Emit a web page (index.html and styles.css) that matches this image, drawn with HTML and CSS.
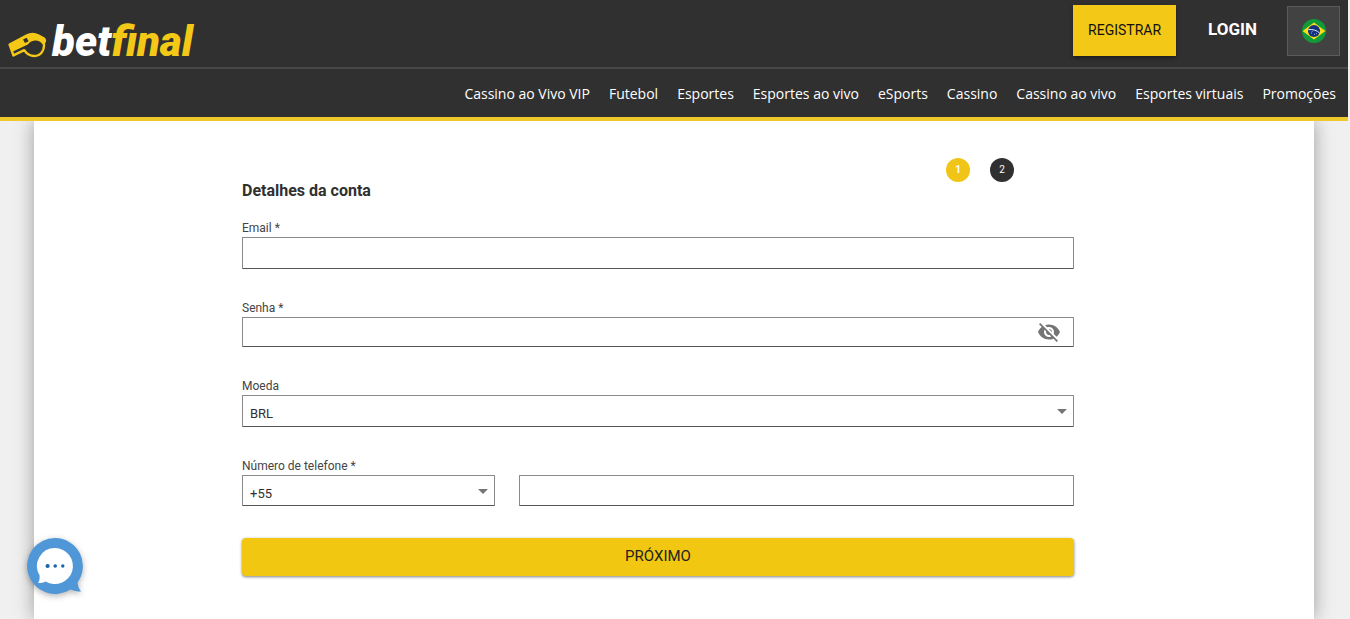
FILE: index.html
```html
<!DOCTYPE html>
<html lang="pt-BR">
<head>
<meta charset="utf-8">
<title>betfinal</title>
<meta name="viewport" content="width=device-width, initial-scale=1">
<link rel="stylesheet" href="styles.css">
</head>
<body>
<header class="header">
  <div class="topbar">
    <a class="logo" href="#">
      <svg class="whistle" viewBox="0 0 39 26" aria-hidden="true">
        <path d="M1.6 12.6 L19 3.4 C22.5 1.6 27 1.8 30.6 3.6 L35.6 6.2 C37.4 7.4 37.4 9.6 35.8 11 C37 18 32.8 24 26.4 24 C21.6 24 18.6 21.8 16.2 18.2 L5.4 23.4 Z" fill="none" stroke="#f3c816" stroke-width="2.4" stroke-linejoin="round"/>
        <path d="M1 12.4 L19 3 C22.5 1.2 27 1.4 30.6 3.2 L36 6.4 L36 11 L34.6 12.6 C33 9.8 30 8.4 27 8.6 C23.6 8.8 21.6 10.4 19.8 12.6 L4 20 Z" fill="#f3c816"/>
        <path d="M15 7.6 L18.6 5.8 L20.6 9.2 L17 11 Z" fill="#303030"/>
      </svg>
      <span class="wordmark">bet<span class="wordmark-accent">final</span></span>
    </a>
    <div class="actions">
      <button class="register" type="button">REGISTRAR</button>
      <a class="login" href="#">LOGIN</a>
      <button class="language" type="button" aria-label="Português (Brasil)">
        <svg width="24" height="24" viewBox="0 0 24 24" aria-hidden="true">
          <circle cx="12" cy="12" r="12" fill="#119b38"/>
          <path d="M0.6 12 L12 3.6 L23.4 12 L12 20.4 Z" fill="#fbdd16"/>
          <circle cx="12" cy="12" r="6" fill="#12307f"/>
          <path d="M6.4 10.6 C10.5 10 15 11.4 17.6 14" fill="none" stroke="#e8eef8" stroke-width="1"/>
          <path d="M9 14h1M12 15.4h1M14 14.8h1M9.6 12.4h1" stroke="#b8c8e8" stroke-width="0.8"/>
        </svg>
      </button>
    </div>
  </div>
  <nav class="nav">
    <a href="#">Cassino ao Vivo VIP</a>
    <a href="#">Futebol</a>
    <a href="#">Esportes</a>
    <a href="#">Esportes ao vivo</a>
    <a href="#">eSports</a>
    <a href="#">Cassino</a>
    <a href="#">Cassino ao vivo</a>
    <a href="#">Esportes virtuais</a>
    <a href="#">Promoções</a>
  </nav>
</header>
<main class="card">
  <form class="form">
    <div class="form-head">
      <h1 class="title">Detalhes da conta</h1>
      <ol class="steps">
        <li class="step step-active">1</li>
        <li class="step">2</li>
      </ol>
    </div>
    <div class="field">
      <label for="email">Email *</label>
      <input class="control" id="email" type="email">
    </div>
    <div class="field">
      <label for="password">Senha *</label>
      <div class="control control-short password">
        <input class="password-input" id="password" type="password">
        <button class="reveal" type="button" aria-label="Mostrar senha">
          <svg width="24" height="24" viewBox="0 0 24 24" fill="#757575" aria-hidden="true">
            <path d="M12 7c2.76 0 5 2.24 5 5 0 .65-.13 1.26-.36 1.83l2.92 2.92c1.51-1.26 2.7-2.89 3.43-4.75-1.73-4.39-6-7.5-11-7.5-1.4 0-2.74.25-3.98.7l2.16 2.16C10.74 7.13 11.35 7 12 7zM2 4.27l2.28 2.28.46.46C3.08 8.3 1.78 10.02 1 12c1.73 4.39 6 7.5 11 7.5 1.55 0 3.03-.3 4.38-.84l.42.42L19.73 22 21 20.73 3.27 3 2 4.27zM7.53 9.8l1.55 1.55c-.05.21-.08.43-.08.65 0 1.66 1.34 3 3 3 .22 0 .44-.03.65-.08l1.55 1.55c-.67.33-1.41.53-2.2.53-2.76 0-5-2.24-5-5 0-.79.2-1.53.53-2.2zm4.31-.78l3.15 3.15.02-.16c0-1.66-1.34-3-3-3l-.17.01z"/>
          </svg>
        </button>
      </div>
    </div>
    <div class="field">
      <label for="currency">Moeda</label>
      <div class="select">
        <select class="control" id="currency"><option>BRL</option></select>
      </div>
    </div>
    <div class="field">
      <label for="prefix">Número de telefone *</label>
      <div class="phone">
        <div class="select">
          <select class="control" id="prefix"><option>+55</option></select>
        </div>
        <input class="control" type="tel" aria-label="Número de telefone">
      </div>
    </div>
    <button class="submit" type="submit">PRÓXIMO</button>
  </form>
</main>
<button class="chat" type="button" aria-label="Chat">
  <svg width="56" height="56" viewBox="0 0 56 56" aria-hidden="true">
    <path d="M28 0 A28 28 0 0 1 50.5 44.5 C51 48 52 51 54 53.5 C50 53.4 46.5 52.6 43.5 51.4 A28 28 0 1 1 28 0 Z" fill="#4f97d7"/>
    <path d="M28 10 A18 18 0 1 1 18.6 43.4 C16.6 44.6 14 45 11 45 C12.4 43 12.8 40.4 12.6 37.4 A18 18 0 0 1 28 10 Z" fill="#fff"/>
    <circle cx="20.6" cy="28" r="2.1" fill="#1b66a8"/>
    <circle cx="28.2" cy="28" r="1.8" fill="#1b66a8"/>
    <circle cx="35.8" cy="28" r="1.7" fill="#1b66a8"/>
  </svg>
</button>
</body>
</html>
```
FILE: styles.css
```css
* { box-sizing: border-box; }

body {
  margin: 0;
  padding-right: 2px;
  min-height: 100vh;
  display: flex;
  flex-direction: column;
  background: #f0f0f0;
  color: #303030;
  font-family: Roboto, sans-serif;
}

button, input, select { font-family: inherit; }
button { border: 0; padding: 0; cursor: pointer; }
a { color: inherit; text-decoration: none; }

.header {
  position: relative;
  z-index: 1;
  background: #303030;
  color: #fff;
  border-bottom: 4px solid #efc928;
}

.topbar {
  display: flex;
  justify-content: space-between;
  align-items: flex-start;
  padding: 5px 8px 6px;
  border-bottom: 2px solid #484848;
}

.logo {
  display: flex;
  align-items: center;
  gap: 5px;
  padding-top: 18px;
}
.whistle { width: 39px; height: 26px; margin-top: 6px; }
.wordmark {
  font: italic 900 42px/38px Roboto, sans-serif;
}
.wordmark-accent { color: #f3c816; }

.actions { display: flex; align-items: center; }
.register {
  width: 103px;
  height: 51px;
  padding-bottom: 2px;
  background: #f3c816;
  color: #111;
  font-size: 14px;
  box-shadow: 0 2px 4px rgba(0, 0, 0, .4);
}
.login {
  padding: 0 30px 3px 32px;
  font-size: 17px;
  font-weight: 700;
}
.language {
  width: 53px;
  height: 50px;
  display: grid;
  place-items: center;
  background: #424242;
  border: 1px solid #5a5a5a;
}

.nav {
  display: flex;
  justify-content: flex-end;
  gap: 19px;
  padding: 15px 12px 13px;
  font: 14px/20px "Open Sans", sans-serif;
}

.card {
  flex: 1;
  margin: 0 34px;
  padding: 37px 240px 42px 208px;
  background: #fff;
  box-shadow: 0 0 18px rgba(0, 0, 0, .35);
}

.form-head {
  display: flex;
  justify-content: space-between;
  align-items: flex-start;
  margin-bottom: 16px;
}
.title {
  margin: 21px 0 0;
  font-size: 16px;
  line-height: 24px;
  font-weight: 700;
}
.steps {
  display: flex;
  gap: 20px;
  margin: 0 60px 0 0;
  padding: 0;
  list-style: none;
}
.step {
  width: 24px;
  height: 24px;
  border-radius: 50%;
  background: #303030;
  color: #fff;
  font-size: 10px;
  line-height: 24px;
  text-align: center;
}
.step-active { background: #f1c517; font-weight: 700; }

.field { margin-bottom: 30px; }
.field label {
  display: block;
  color: #444;
  font-size: 12px;
  line-height: 18px;
}

.control {
  display: block;
  width: 100%;
  height: 32px;
  padding: 4px 7px 0;
  border: 1px solid #8a8a8a;
  border-bottom-color: #555;
  border-radius: 1px;
  background: #fff;
  color: #303030;
  font-size: 13px;
  appearance: none;
}
.control-short { height: 30px; }

.password { display: flex; align-items: center; padding: 0 12px 0 7px; }
.password-input { flex: 1; border: 0; padding: 0; outline: 0; }
.reveal { height: 24px; background: none; }

.select { position: relative; }
.select::after {
  content: "";
  position: absolute;
  right: 7px;
  top: 14px;
  border: 5px solid transparent;
  border-top-color: #757575;
  border-bottom: 0;
  pointer-events: none;
}

.phone {
  display: grid;
  grid-template-columns: 253px 1fr;
  gap: 24px;
}
.phone .control { height: 31px; padding-top: 5px; }

.submit {
  width: 100%;
  height: 38px;
  padding-bottom: 3px;
  margin-top: 2px;
  border-radius: 4px;
  background: #f1c712;
  color: #222;
  font-size: 15px;
  box-shadow: 0 1px 3px rgba(0, 0, 0, .5);
}

.chat {
  position: fixed;
  left: 27px;
  bottom: 25px;
  width: 56px;
  height: 56px;
  border-radius: 50%;
  background: none;
  filter: drop-shadow(0 2px 3px rgba(0, 0, 0, .3));
}
```
